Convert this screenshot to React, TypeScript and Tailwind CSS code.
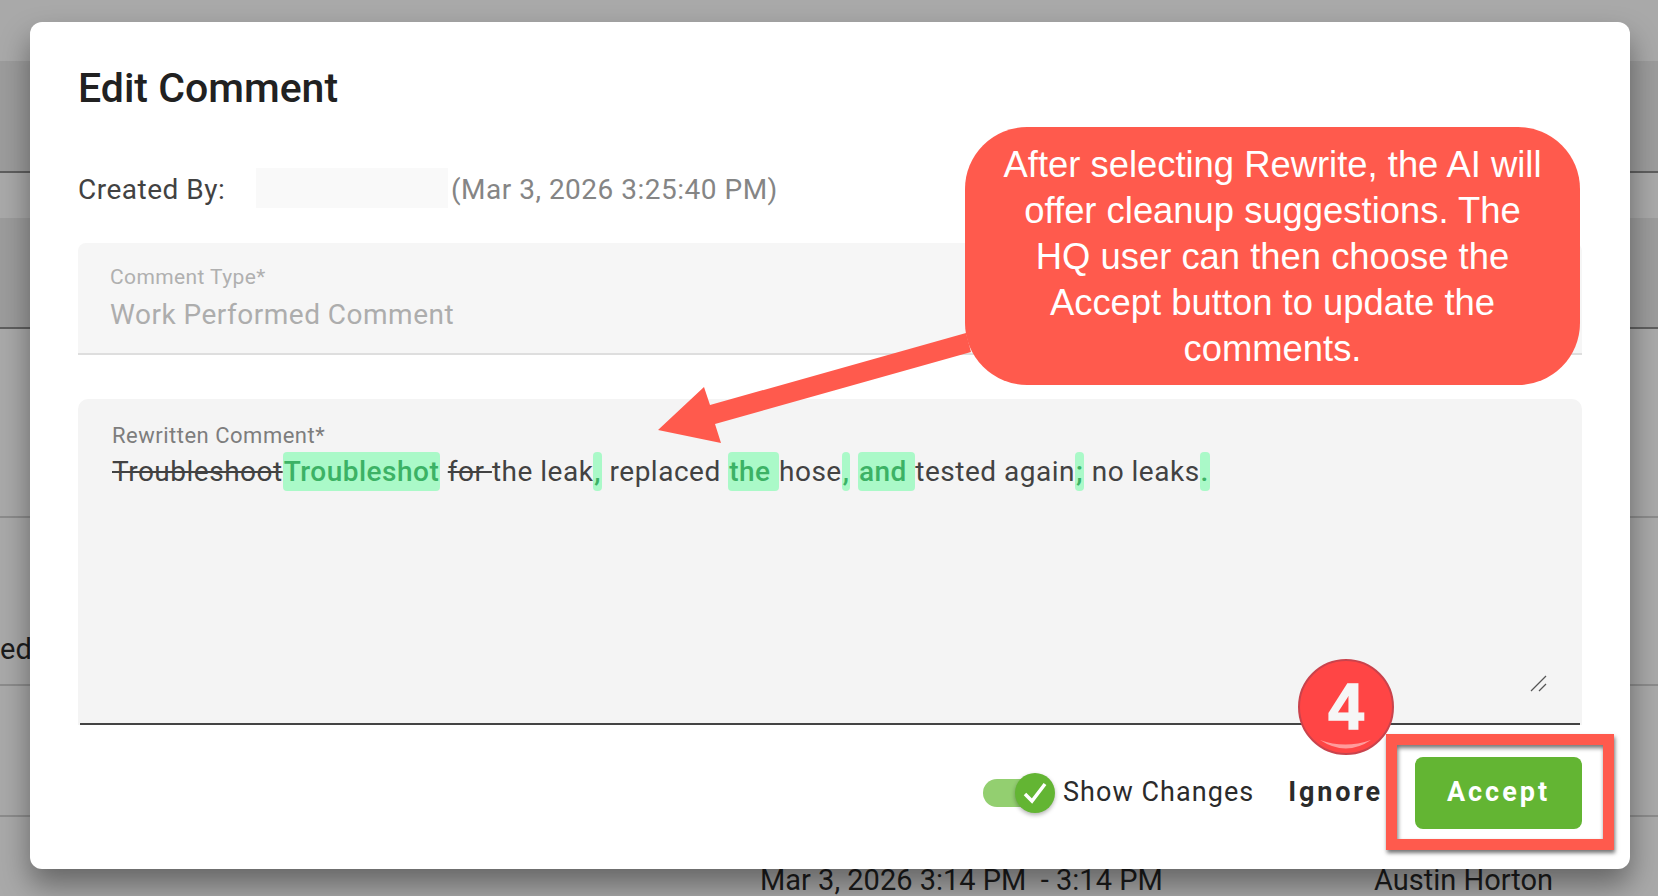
import type { ReactNode } from "react";

function BackgroundRows() {
  return (
    <div className="absolute inset-0 flex flex-col font-['Roboto',sans-serif] text-[29px] text-[#1c1c1c]">
      <div className="h-[61px] shrink-0" />
      <div className="h-[112px] shrink-0 border-b-2 border-[#5f5f5f] bg-[#9c9c9c]" />
      <div className="h-[45px] shrink-0" />
      <div className="h-[111px] shrink-0 border-b-2 border-[#5f5f5f] bg-[#9c9c9c]" />
      <div className="h-[189px] shrink-0 border-b-2 border-[#8c8c8c]" />
      <div className="h-[168px] shrink-0 border-b-2 border-[#8c8c8c] flex items-end pb-[17px]">
        <span className="leading-[36px]">ed</span>
      </div>
      <div className="h-[131px] shrink-0 border-b-2 border-[#8c8c8c]" />
      <div className="flex-1 flex items-end">
        <span className="ml-[760px] w-[614px] leading-[32px] whitespace-pre">Mar 3, 2026 3:14 PM  - 3:14 PM</span>
        <span className="leading-[32px]">Austin Horton</span>
      </div>
    </div>
  );
}

function Added({ children }: { children: ReactNode }) {
  return <span className="bg-[#aaf9c8] text-[#3cb265] rounded-[4px] py-[3px] px-[1px] font-medium">{children}</span>;
}

function Toggle() {
  return (
    <div className="relative w-[72px] h-[40px] flex items-center">
      <div className="w-[60px] h-[28px] rounded-full bg-[#93cf70]" />
      <div className="absolute right-0 top-0 w-[40px] h-[40px] rounded-full bg-[#63b533] shadow-[0_2px_4px_rgba(0,0,0,0.3)] flex items-center justify-center">
        <svg width="30" height="30" viewBox="0 0 30 30" fill="none" stroke="white" strokeWidth="3.5">
          <polyline points="5,16 12,23 25,6" />
        </svg>
      </div>
    </div>
  );
}

function Annotations() {
  return (
    <>
      <svg className="absolute left-[650px] top-[320px] pointer-events-none" width="340" height="130" viewBox="650 320 340 130">
        <polygon fill="#ff5a4d" points="658,430 704,387 710,405 966,333 971,352 715,424 721,443" />
      </svg>
      <div className="absolute left-[965px] top-[127px] w-[615px] h-[258px] rounded-[62px] bg-[#ff5a4d] text-white text-center font-['Liberation_Sans',sans-serif] text-[36.4px] leading-[46px] pt-[15px] px-[33px]">
        After selecting Rewrite, the AI will offer cleanup suggestions. The HQ user can then choose the Accept button to update the comments.
      </div>
      <div className="absolute left-[1298px] top-[659px] w-[96px] h-[96px] rounded-full bg-[#ff4545] border-2 border-[#c9434c] overflow-hidden flex items-center justify-center font-['Liberation_Sans',sans-serif] font-bold text-[64px] leading-none text-[#f6f6f6] [-webkit-text-stroke:1.5px_#f6f6f6]">
        4
        <svg className="absolute left-0 top-0" width="92" height="92" viewBox="0 0 92 92">
          <path d="M20 79 Q45 88 71 79 Q46 96 20 79 Z" fill="#ff9c9c" />
        </svg>
      </div>
      <div className="absolute left-[1386px] top-[734px] w-[228px] h-[116px] border-[11px] border-[#ff5a4d] shadow-[1px_3px_4px_rgba(0,0,0,0.55),inset_1px_3px_4px_rgba(0,0,0,0.55)] pointer-events-none" />
    </>
  );
}

export default function App() {
  return (
    <div className="relative h-[896px] w-[1658px] overflow-hidden bg-[#a9a9a9] font-['Roboto',sans-serif]">
      <BackgroundRows />

      <div className="absolute left-[30px] top-[22px] w-[1600px] h-[847px] rounded-[12px] bg-white shadow-[0_16px_30px_rgba(0,0,0,0.4)] px-[48px] pt-[44px]">
        <h1 className="h-[44px] text-[41px] leading-[44px] font-medium text-[#212121]">Edit Comment</h1>

        <div className="mt-[58px] h-[40px] flex items-center text-[28px] tracking-[0.5px]">
          <span className="w-[178px] pt-[4px] text-[#424242]">Created By:</span>
          <div className="w-[192px] h-[40px] bg-[#f9f9f9]" />
          <span className="ml-[3px] pt-[4px] text-[#858585]">(Mar 3, 2026 3:25:40 PM)</span>
        </div>

        <div className="mt-[35px] h-[112px] rounded-t-[8px] bg-[#f6f6f6] border-b-2 border-[#dedede] px-[32px] pt-[20px]">
          <div className="text-[21px] leading-[28px] tracking-[0.4px] text-[#b0b0b0]">Comment Type*</div>
          <div className="mt-[4px] text-[28px] leading-[40px] tracking-[0.5px] text-[#adadad]">Work Performed Comment</div>
        </div>

        <div className="mt-[44px] h-[326px] rounded-t-[10px] bg-[#f4f4f4] px-[34px] pt-[23px] relative">
          <div className="text-[22px] leading-[28px] tracking-[0.5px] text-[#7d7d7d]">Rewritten Comment*</div>
          <div className="mt-[2px] text-[28px] leading-[40px] tracking-[0.5px] text-[#424242] whitespace-pre">
            <span className="line-through">Troubleshoot</span>
            <Added>Troubleshot</Added>{" "}
            <span className="line-through">for </span>
            the leak<Added>,</Added> replaced <Added>the </Added>hose<Added>,</Added> <Added>and </Added>tested again<Added>;</Added> no leaks<Added>.</Added>
          </div>
          <svg className="absolute right-[34px] bottom-[32px]" width="18" height="18" viewBox="0 0 18 18" stroke="#555" strokeWidth="1.2">
            <line x1="1" y1="16" x2="16" y2="1" />
            <line x1="9" y1="16" x2="16" y2="9" />
          </svg>
          <div className="absolute left-[2px] right-[2px] bottom-0 h-[2px] bg-[#444]" />
        </div>

        <div className="mt-[32px] flex items-center justify-end">
          <Toggle />
          <span className="ml-[8px] mb-[2px] text-[27px] tracking-[1.05px] text-[#2b2b2b]">Show Changes</span>
          <span className="ml-[34px] mb-[2px] text-[27px] font-bold tracking-[2.8px] text-[#2b2b2b]">Ignore</span>
          <button className="ml-[32px] w-[167px] h-[72px] pb-[2px] rounded-[8px] bg-[#63b533] text-white text-[27px] font-bold tracking-[3px]">Accept</button>
        </div>
      </div>

      <Annotations />
    </div>
  );
}
